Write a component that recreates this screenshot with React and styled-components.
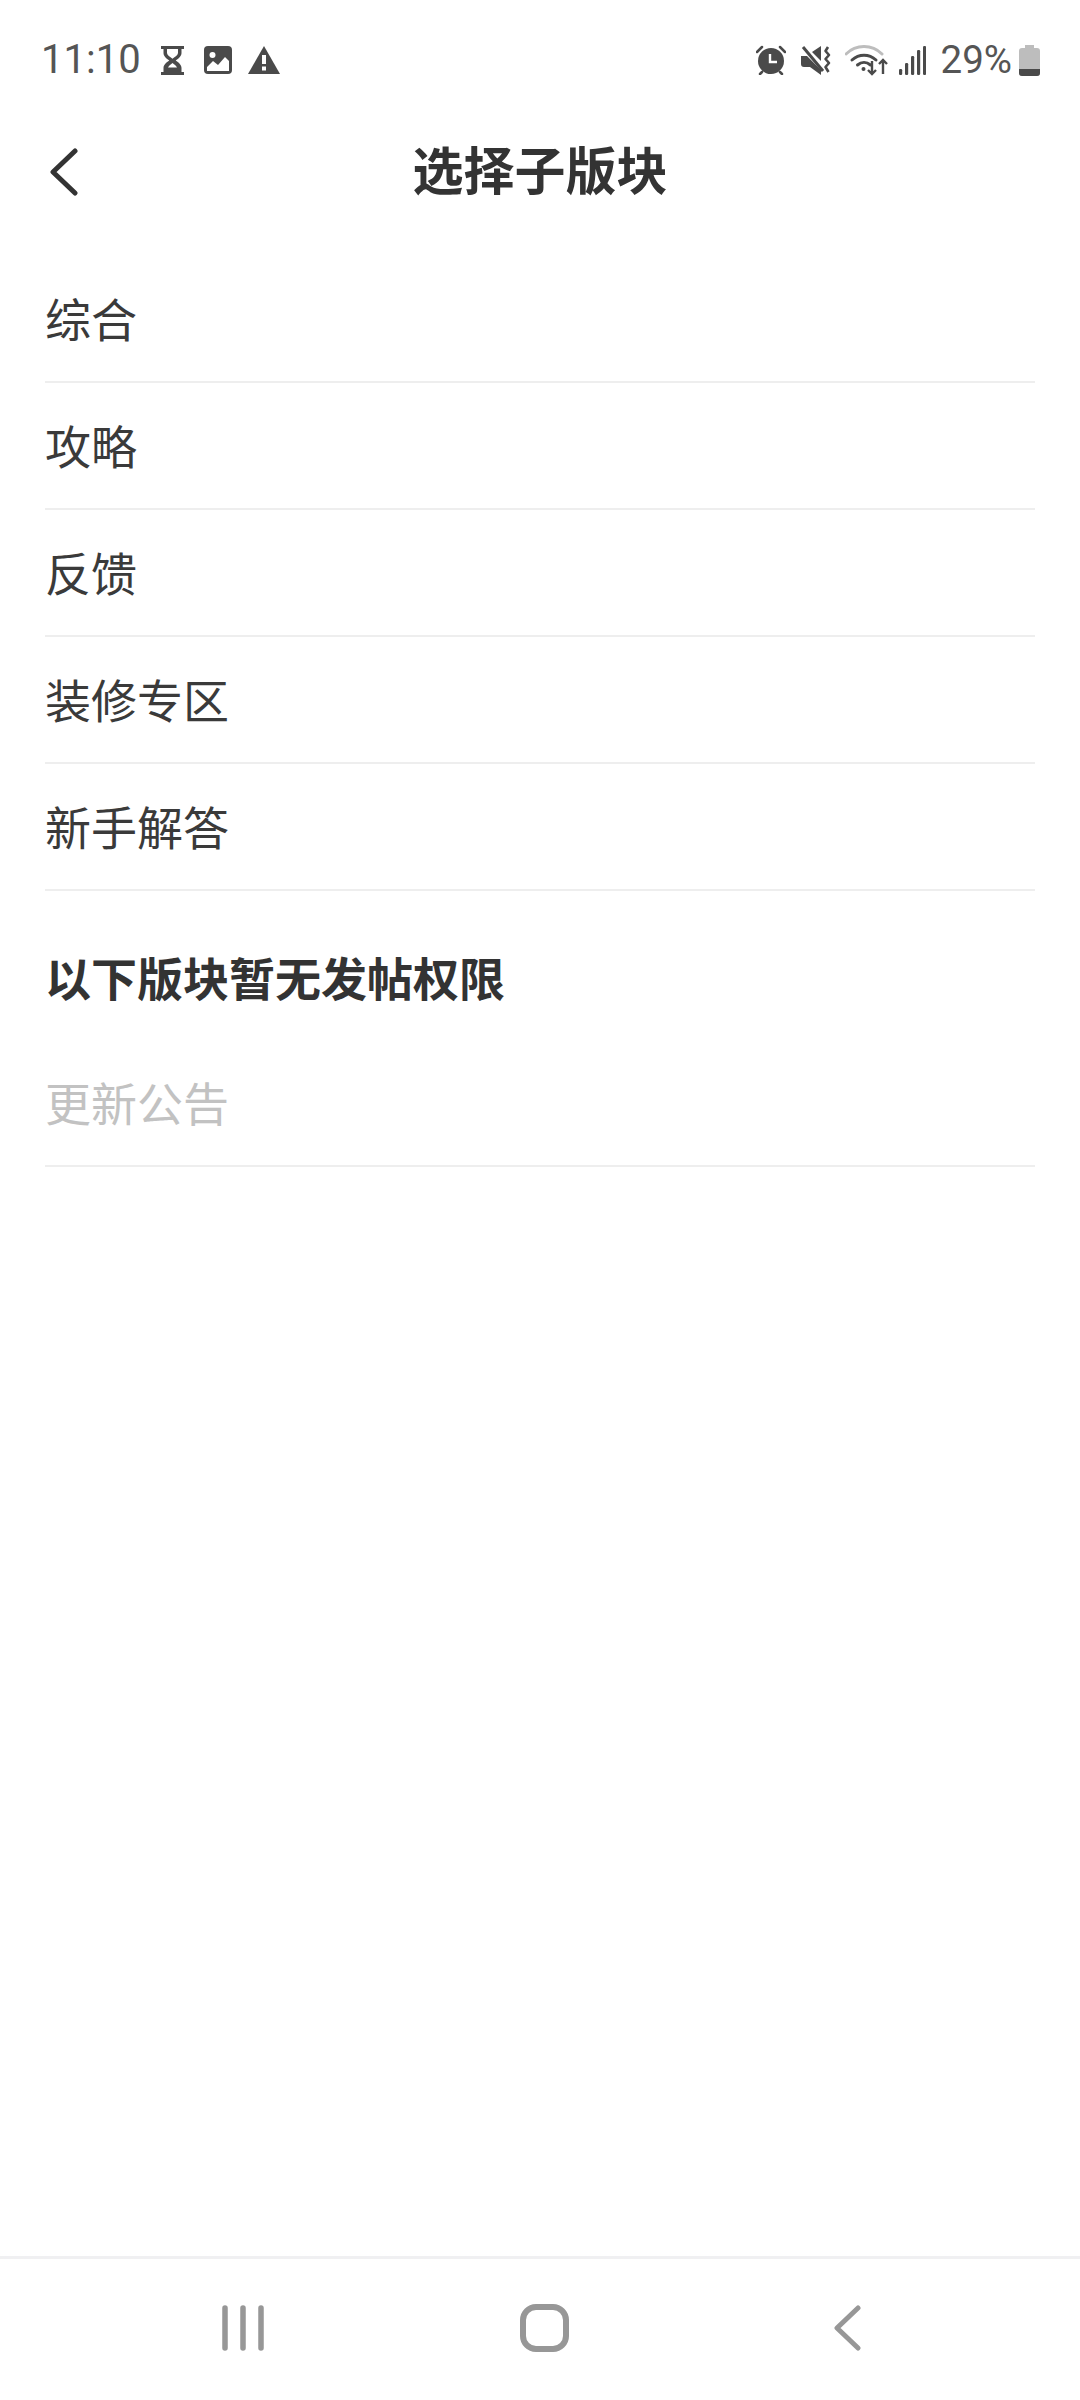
import React from 'react'
import styled, { createGlobalStyle } from 'styled-components'

const GlobalStyle = createGlobalStyle`
  html, body {
    margin: 0;
    padding: 0;
    background: #fff;
  }
  * {
    box-sizing: border-box;
  }
`

const Page = styled.div`
  width: 1080px;
  height: 2400px;
  display: flex;
  flex-direction: column;
  background: #fff;
  font-family: "Noto Sans CJK SC", "Noto Sans", sans-serif;
`

const StatusBar = styled.div`
  height: 120px;
  flex: none;
  display: flex;
  justify-content: space-between;
  align-items: center;
  padding: 0 40px 0 41px;
  color: #4a4a4a;
`

const StatusGroup = styled.div`
  display: flex;
  align-items: center;
`

const StatusText = styled.span`
  font-family: Roboto, "Liberation Sans", sans-serif;
  font-size: ${props => props.$size}px;
  font-weight: 400;
  line-height: 44px;
  margin-left: ${props => props.$gap || 0}px;
  color: #555;
`

const StatusIcon = styled.svg`
  display: block;
  flex: none;
  margin-left: ${props => props.$gap}px;
`

const Header = styled.header`
  height: 104px;
  flex: none;
  position: relative;
  display: flex;
  align-items: center;
  justify-content: center;
  padding-bottom: 8px;
`

const BackButton = styled.svg`
  position: absolute;
  left: 50px;
  top: 28px;
`

const Title = styled.h1`
  margin: 0;
  font-size: 51px;
  font-weight: 700;
  line-height: 60px;
  color: #333;
`

const Main = styled.main`
  flex: 1;
  padding: 32px 45px 0;
`

const Row = styled.div`
  height: 127px;
  display: flex;
  align-items: center;
  padding-bottom: 4px;
  border-bottom: 2px solid #eeeeee;
  font-size: 46px;
  font-weight: 400;
  color: ${props => (props.$disabled ? '#c2c2c2' : '#3a3a3a')};
`

const SectionTitle = styled.h2`
  margin: 0;
  height: 149px;
  padding-top: 20px;
  display: flex;
  align-items: center;
  font-size: 46px;
  font-weight: 700;
  color: #333;
`

const NavBar = styled.nav`
  height: 144px;
  flex: none;
  display: flex;
  align-items: center;
  border-top: 3px solid #f0f0f2;
  padding: 0 0 3px 222px;
`

const NavIcon = styled.svg`
  display: block;
  flex: none;
  color: #979797;
  margin-right: ${props => props.$after || 0}px;
`

const Hourglass = () => (
  <StatusIcon $gap={20} width="23" height="29" viewBox="0 0 23 29">
    <path d="M0 0h23v3h-2.500v4c0 3.400-3 5.500-5.800 7.500 2.800 2 5.800 4.100 5.800 7.500v4H23v3H0v-3h2.500v-4c0-3.400 3-5.500 5.800-7.500C5.500 12.500 2.500 10.400 2.500 7V3H0z" fill="#4a4a4a" />
    <path d="M6 3h11v4c0 2-3 4-5.500 5.700C9 11 6 9 6 7z" fill="#fff" />
    <path d="M11.500 17C9.500 18.500 7.500 20 7 21.500h9c-.5-1.500-2.500-3-4.500-4.500z" fill="#fff" />
  </StatusIcon>
)

const ImageIcon = () => (
  <StatusIcon $gap={20} width="28" height="28" viewBox="0 0 28 28">
    <rect width="28" height="28" rx="4" fill="#4a4a4a" />
    <circle cx="8.500" cy="9" r="3" fill="#fff" />
    <path d="M3 25v-4l6-6 5 4 7-8 4 4v10z" fill="#fff" />
  </StatusIcon>
)

const WarningIcon = () => (
  <StatusIcon $gap={16} width="32" height="28" viewBox="0 0 32 28">
    <path d="M16 0l16 28H0z" fill="#4a4a4a" />
    <rect x="14" y="9" width="4" height="9" fill="#fff" />
    <rect x="14" y="20.500" width="4" height="4" fill="#fff" />
  </StatusIcon>
)

const AlarmIcon = () => (
  <StatusIcon $gap={0} width="30" height="30" viewBox="0 0 30 30">
    <circle cx="15" cy="16" r="13" fill="#4a4a4a" />
    <path d="M1 7l5-5M29 7l-5-5M6 27l-2 2M24 27l2 2" stroke="#4a4a4a" strokeWidth="2.500" strokeLinecap="round" />
    <path d="M14 9v8h7" stroke="#fff" strokeWidth="2.400" fill="none" />
  </StatusIcon>
)

const MuteIcon = () => (
  <StatusIcon $gap={15} width="30" height="29" viewBox="0 0 30 29">
    <path d="M0 10h6l14 14v5L9 21H3c-2 0-3-1-3-3z" fill="#4a4a4a" />
    <path d="M11 6l9-6v15z" fill="#4a4a4a" />
    <path d="M2 1l20 24" stroke="#4a4a4a" strokeWidth="3" />
    <path d="M27 1l-2.500 4 3.500 4-3.500 4 3.500 4-3.500 4 3 5" stroke="#4a4a4a" strokeWidth="2.600" fill="none" strokeLinejoin="round" />
  </StatusIcon>
)

const WifiIcon = () => (
  <StatusIcon $gap={14} width="44" height="32" viewBox="0 0 44 32">
    <path d="M1 10C11 0 27 0 37 10" stroke="#bdbdbd" strokeWidth="3" fill="none" strokeLinecap="round" />
    <path d="M7 16c7-6.500 17-6.500 24 0M12.500 21c4-3.500 9-3.500 13 0" stroke="#4a4a4a" strokeWidth="3" fill="none" strokeLinecap="round" />
    <circle cx="18.500" cy="25" r="2" fill="#4a4a4a" />
    <path d="M27 17v13M23 26l4 4 4-4" stroke="#4a4a4a" strokeWidth="2.400" fill="none" />
    <path d="M38 30V16M34 20l4-4 4 4" stroke="#4a4a4a" strokeWidth="2.400" fill="none" />
  </StatusIcon>
)

const SignalIcon = () => (
  <StatusIcon $gap={10} width="27" height="29" viewBox="0 0 27 29">
    {[[0, 23], [6, 17], [12, 10], [18, 4], [24, 0]].map(([x, y]) => (
      <rect key={x} x={x} y={y} width="3.200" height={29 - y} rx="1.200" fill="#4a4a4a" />
    ))}
  </StatusIcon>
)

const BatteryIcon = () => (
  <StatusIcon $gap={7} width="21" height="31" viewBox="0 0 21 31">
    <path d="M6 0h9v3h3c2 0 3 1 3 3v22c0 2-1 3-3 3H3c-2 0-3-1-3-3V6c0-2 1-3 3-3h3z" fill="#bdbdbd" />
    <path d="M0 24h21v4c0 2-1 3-3 3H3c-2 0-3-1-3-3z" fill="#4a4a4a" />
  </StatusIcon>
)

const topics = ['综合', '攻略', '反馈', '装修专区', '新手解答']

const App = () => (
  <Page>
    <GlobalStyle />
    <StatusBar>
      <StatusGroup>
        <StatusText $size={40}>11:10</StatusText>
        <Hourglass />
        <ImageIcon />
        <WarningIcon />
      </StatusGroup>
      <StatusGroup>
        <AlarmIcon />
        <MuteIcon />
        <WifiIcon />
        <SignalIcon />
        <StatusText $size={38.5} $gap={15}>29%</StatusText>
        <BatteryIcon />
      </StatusGroup>
    </StatusBar>
    <Header>
      <BackButton width="28" height="48" viewBox="0 0 28 48">
        <path d="M25 3L3 24l22 21" stroke="#333" strokeWidth="5" fill="none" strokeLinecap="round" strokeLinejoin="round" />
      </BackButton>
      <Title>选择子版块</Title>
    </Header>
    <Main>
      {topics.map(topic => (
        <Row key={topic}>{topic}</Row>
      ))}
      <SectionTitle>以下版块暂无发帖权限</SectionTitle>
      <Row $disabled>更新公告</Row>
    </Main>
    <NavBar>
      <NavIcon $after={256} width="42" height="46" viewBox="0 0 42 46">
        <path d="M3 3v40M21 3v40M39 3v40" stroke="currentColor" strokeWidth="5.500" strokeLinecap="round" />
      </NavIcon>
      <NavIcon $after={265} width="49" height="48" viewBox="0 0 49 48">
        <rect x="3" y="3" width="43" height="42" rx="13" stroke="currentColor" strokeWidth="6" fill="none" />
      </NavIcon>
      <NavIcon width="27" height="46" viewBox="0 0 27 46">
        <path d="M24 3L3 23l21 20" stroke="currentColor" strokeWidth="5" fill="none" strokeLinecap="round" strokeLinejoin="round" />
      </NavIcon>
    </NavBar>
  </Page>
)

export default App
